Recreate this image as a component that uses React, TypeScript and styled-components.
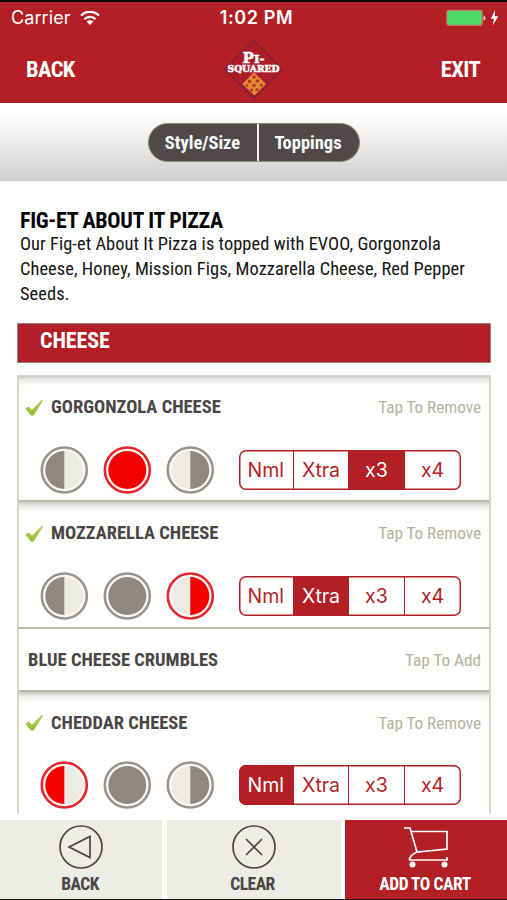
import React from "react";
import styled, { createGlobalStyle } from "styled-components";

const RED = "#b21f24";
const INK = "#4b4645";
const STONE = "#b5b3a0";

const GlobalStyle = createGlobalStyle`
  * { box-sizing: border-box; }
  body { margin: 0; background: #fff; font-family: "Roboto Condensed", Roboto, sans-serif; font-stretch: 75%; }
  button { font: inherit; letter-spacing: inherit; color: inherit; background: none; border: 0; padding: 0; margin: 0; }
  svg { display: block; }
`;

const Screen = styled.div`
  width: 507px;
  height: 900px;
  overflow: hidden;
  display: flex;
  flex-direction: column;
  background: #fff;
  border-top: 2px solid #000;
  border-bottom: 1px solid #1a1718;
  white-space: nowrap;
`;

const StatusBar = styled.div`
  height: 34px;
  flex: none;
  background: ${RED};
  color: #fff;
  display: grid;
  grid-template-columns: 1fr auto 1fr;
  align-items: center;
  padding: 0 8px 2px 11px;
  font: 400 18px/32px Inter, sans-serif;
  font-stretch: 100%;
`;

const StatusSide = styled.div<{ $end?: boolean }>`
  display: flex;
  align-items: center;
  gap: 9px;
  justify-content: ${(p) => (p.$end ? "flex-end" : "flex-start")};
  letter-spacing: 0.1px;
`;

const Clock = styled.div`
  font-weight: 580;
  font-size: 18px;
  letter-spacing: 0.65px;
  padding-left: 3px;
`;

const NavBar = styled.div`
  height: 67px;
  flex: none;
  background: ${RED};
  border-bottom: 1px solid #a3191e;
  color: #fff;
  display: grid;
  grid-template-columns: 1fr 64px 1fr;
  align-items: center;
  padding: 0 27px 0 26px;
  font-weight: 700;
  font-size: 22.5px;
  letter-spacing: -0.6px;
`;

const NavButton = styled.button<{ $end?: boolean }>`
  justify-self: ${(p) => (p.$end ? "end" : "start")};
`;

const TabStrip = styled.div`
  height: 78px;
  flex: none;
  display: flex;
  justify-content: center;
  align-items: center;
  background: linear-gradient(#fff 15%, #cfcfcf);
`;

const TabPill = styled.div`
  width: 212px;
  height: 39px;
  display: grid;
  grid-template-columns: 108px 1fr;
  border: 1.5px solid #8f8a76;
  border-radius: 20px;
  overflow: hidden;
  background: #514949;
  color: #fff;
  font-weight: 700;
  font-size: 18.5px;
`;

const Tab = styled.button`
  padding-top: 1px;
  & + & { border-left: 2px solid #f4f2ee; padding-right: 1px; }
`;

const Content = styled.main`
  height: 639px;
  flex: none;
  padding: 29px 16px 0 17px;
`;

const PizzaTitle = styled.h1`
  margin: 0 0 -1px 3px;
  font-size: 22px;
  line-height: 22px;
  font-weight: 700;
  letter-spacing: -0.31px;
  color: #050505;
`;

const Description = styled.p`
  margin: 0 0 0 3px;
  font-size: 18.4px;
  line-height: 25px;
  letter-spacing: 0.06px;
  color: #141414;
`;

const SectionHeader = styled.h2`
  margin: 17px 0 12px;
  height: 40px;
  padding: 0 22px;
  border: 1px solid #98827f;
  background: ${RED};
  color: #fff;
  font-size: 22px;
  line-height: 33px;
  font-weight: 700;
  letter-spacing: -0.1px;
`;

const List = styled.div`
  height: 439px;
  overflow: hidden;
  border: 2px solid #d5d5ca;
  border-width: 1px 2px 0;
`;

const Item = styled.section<{ $open?: boolean }>`
  height: ${(p) => (p.$open ? 126.25 : 63)}px;
  border-bottom: 2px solid #b9baa6;
  background: ${(p) => (p.$open ? "linear-gradient(#c9c9c7, #ececea 4px, #fff 10px)" : "#fff")};
`;

const ItemHead = styled.div<{ $open?: boolean }>`
  height: 62px;
  display: flex;
  align-items: center;
  padding: 0 8px 0 ${(p) => (p.$open ? 6 : 9)}px;
`;

const ItemName = styled.span`
  flex: 1;
  font-size: 18.5px;
  font-weight: 700;
  color: ${INK};
`;

const ItemAction = styled.button`
  font-size: 17.3px;
  letter-spacing: -0.05px;
  color: ${STONE};
`;

const Controls = styled.div`
  display: flex;
  align-items: center;
  height: 62px;
  padding: 1px 0 0 20px;
  gap: 13px;
`;

const Segments = styled.div`
  margin-left: 10.6px;
  display: grid;
  grid-template-columns: 54.5px 55px 55.5px 57px;
  width: 222px;
  height: 40px;
  border-radius: 7px;
  overflow: hidden;
  box-shadow: inset 0 0 0 1.5px ${RED};
`;

const Segment = styled.button<{ $on?: boolean }>`
  font: 400 19.5px Inter, sans-serif;
  font-stretch: 100%;
  color: ${(p) => (p.$on ? "#fff" : RED)};
  background: ${(p) => (p.$on ? RED : "transparent")};
  & + & { border-left: 1.5px solid ${RED}; }
`;

const Footer = styled.footer`
  height: 79px;
  flex: none;
  display: grid;
  grid-template-columns: 162px 174px 162px;
  column-gap: 4.5px;
  color: ${INK};
`;

const FooterButton = styled.button<{ $primary?: boolean }>`
  display: flex;
  flex-direction: column;
  align-items: center;
  padding: 5px 2px 0 0;
  background: ${(p) => (p.$primary ? RED : "#edece5")};
  color: ${(p) => (p.$primary ? "#fff" : INK)};
  font-size: 17.5px;
  font-weight: 700;
  letter-spacing: -0.5px;
  line-height: 24px;
  gap: 3px;
  & > svg { margin-left: 2px; }
`;

type Half = "left" | "whole" | "right";

function Portion({ half, on }: { half: Half; on: boolean }) {
  const fill = on ? "#f40000" : "#8f8782";
  const ring = on ? "#e9242a" : "#999491";
  return (
    <svg width="50" height="50" viewBox="0 0 50 50">
      <circle cx="25.3" cy="25" r="22.5" fill="#fbf9f5" stroke={ring} strokeWidth="2.6" />
      <circle cx="25.3" cy="25" r="19" fill={half === "whole" ? fill : "#edece3"} />
      {half === "left" && <path d="M25.3 6A19 19 0 0 0 25.3 44Z" fill={fill} />}
      {half === "right" && <path d="M25.3 6A19 19 0 0 1 25.3 44Z" fill={fill} />}
    </svg>
  );
}

function Check() {
  return (
    <svg width="20" height="20" viewBox="0 0 20 20">
      <defs>
        <linearGradient id="leaf" x1="0" y1="0" x2="0" y2="1">
          <stop offset="0" stopColor="#b9d36c" />
          <stop offset="1" stopColor="#8fbc26" />
        </linearGradient>
      </defs>
      <path d="M.3 10.800L3.500 8.500L7 11.800L16.500 2L18.300 2.500L8.500 17.500H6Z" fill="url(#leaf)" />
    </svg>
  );
}

const CheckSlot = styled.span`
  width: 26px;
  padding-top: 1px;
`;

function Logo() {
  return (
    <svg width="64" height="64" viewBox="0 0 64 64">
      <path d="M32.500 3.500L61.500 32.500L32.500 61.500L4 32.500Z" fill="#ae1d27" stroke="#7a2143" strokeWidth="1.200" />
      <path d="M33 35.500L45 47L33.500 58.500L21.500 47Z" fill="#e58b38" />
      <g fill="#b43620">
        <circle cx="33" cy="40" r="1.800" /><circle cx="28.500" cy="44.500" r="1.800" />
        <circle cx="36.500" cy="44" r="1.800" /><circle cx="33" cy="48.500" r="1.800" />
        <circle cx="40.500" cy="48" r="1.600" /><circle cx="26" cy="48.500" r="1.300" />
        <circle cx="36" cy="52.500" r="1.600" /><circle cx="30.500" cy="53" r="1.500" />
      </g>
      <g fill="#fff" stroke="#fff" strokeWidth=".5" fontFamily="DejaVu Serif" fontWeight="700" letterSpacing="0">
        <text x="21.500" y="25.500" fontSize="14" textLength="22" lengthAdjust="spacingAndGlyphs">
          P<tspan fontSize="11">I-</tspan>
        </text>
        <text x="6.500" y="34.800" fontSize="8.500" textLength="52" lengthAdjust="spacingAndGlyphs">SQUARED</text>
      </g>
    </svg>
  );
}

function Wifi() {
  return (
    <svg width="20" height="15" viewBox="0 0 20 15" fill="none" stroke="#fff" strokeWidth="2.300">
      <path d="M1 4.500A12.800 12.800 0 0 1 19 4.500" />
      <path d="M4.300 8.200A8.100 8.100 0 0 1 15.700 8.200" />
      <path d="M10 14L6.600 10.600A4.800 4.800 0 0 1 13.400 10.600Z" fill="#fff" stroke="none" />
    </svg>
  );
}

function Battery() {
  return (
    <svg width="53" height="18" viewBox="0 0 53 18">
      <rect x=".8" y="1.300" width="35.400" height="15" rx="2" fill="#4cd964" stroke="#c9746a" strokeWidth="1.200" />
      <path d="M37.500 6.500Q39.500 7 39.500 9T37.500 11.500Z" fill="#f5dada" />
      <path d="M49 1L44.800 9.800H48L46.700 16.500L52.300 7.300H48.800Z" fill="#fff" />
    </svg>
  );
}

const LEVELS = ["Nml", "Xtra", "x3", "x4"];
const HALVES: Half[] = ["left", "whole", "right"];

const ITEMS: { name: string; half?: Half; level?: string }[] = [
  { name: "GORGONZOLA CHEESE", half: "whole", level: "x3" },
  { name: "MOZZARELLA CHEESE", half: "right", level: "Xtra" },
  { name: "BLUE CHEESE CRUMBLES" },
  { name: "CHEDDAR CHEESE", half: "left", level: "Nml" },
];

export default function App() {
  return (
    <Screen>
      <GlobalStyle />
      <StatusBar>
        <StatusSide>Carrier <Wifi /></StatusSide>
        <Clock>1:02 PM</Clock>
        <StatusSide $end><Battery /></StatusSide>
      </StatusBar>
      <NavBar>
        <NavButton>BACK</NavButton>
        <Logo />
        <NavButton $end>EXIT</NavButton>
      </NavBar>
      <TabStrip>
        <TabPill><Tab>Style/Size</Tab><Tab>Toppings</Tab></TabPill>
      </TabStrip>
      <Content>
        <PizzaTitle>FIG-ET ABOUT IT PIZZA</PizzaTitle>
        <Description>
          Our Fig-et About It Pizza is topped with EVOO, Gorgonzola<br />
          Cheese, Honey, Mission Figs, Mozzarella Cheese, Red Pepper<br />
          Seeds.
        </Description>
        <SectionHeader>CHEESE</SectionHeader>
        <List>
          {ITEMS.map(({ name, half, level }) => (
            <Item key={name} $open={!!half}>
              <ItemHead $open={!!half}>
                {half && <CheckSlot><Check /></CheckSlot>}
                <ItemName>{name}</ItemName>
                <ItemAction>{half ? "Tap To Remove" : "Tap To Add"}</ItemAction>
              </ItemHead>
              {half && (
                <Controls>
                  {HALVES.map((h) => <Portion key={h} half={h} on={h === half} />)}
                  <Segments>
                    {LEVELS.map((l) => <Segment key={l} $on={l === level}>{l}</Segment>)}
                  </Segments>
                </Controls>
              )}
            </Item>
          ))}
        </List>
      </Content>
      <Footer>
        <FooterButton>
          <svg width="44" height="44" viewBox="0 0 44 44" fill="none" stroke={INK} strokeWidth="1.700">
            <circle cx="22" cy="22" r="21" />
            <path d="M10 22L31 11.500V32.500Z" />
          </svg>
          BACK
        </FooterButton>
        <FooterButton>
          <svg width="44" height="44" viewBox="0 0 44 44" fill="none" stroke={INK} strokeWidth="1.700">
            <circle cx="22" cy="22" r="21" />
            <path d="M14 14L30 30M30 14L14 30" />
          </svg>
          CLEAR
        </FooterButton>
        <FooterButton $primary>
          <svg width="46" height="44" viewBox="0 0 46 44" fill="none" stroke="#fff" strokeWidth="1.700">
            <path d="M1 3H7L14 27L44 24V6.500H8M14 27C9.500 29 6.500 31 6.500 35H44V32" />
            <circle cx="9.500" cy="39.500" r="3" fill="#fff" stroke="none" />
            <circle cx="41.500" cy="39.500" r="3" fill="#fff" stroke="none" />
          </svg>
          ADD TO CART
        </FooterButton>
      </Footer>
    </Screen>
  );
}
